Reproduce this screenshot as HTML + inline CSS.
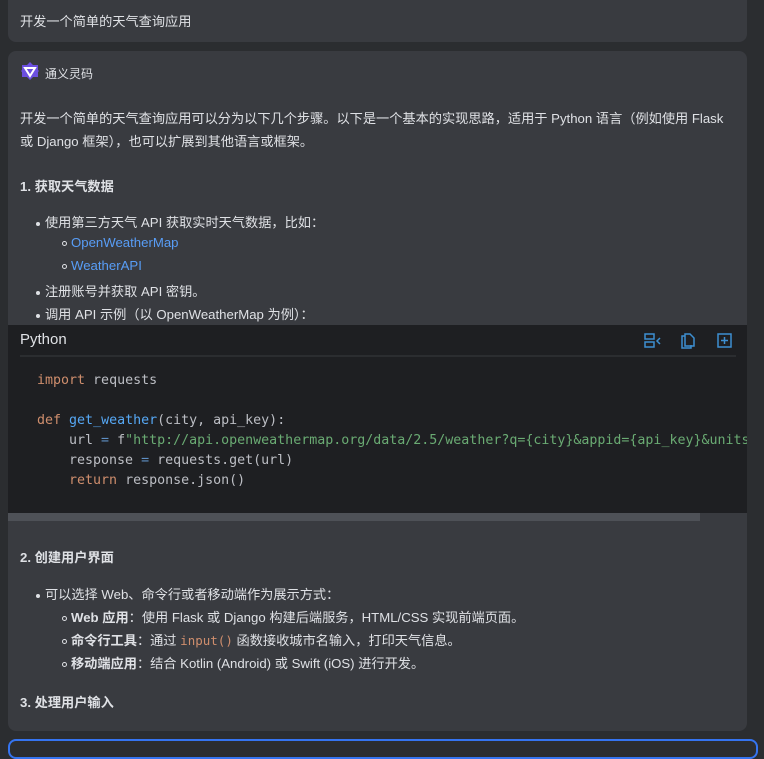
<!DOCTYPE html>
<html><head><meta charset="utf-8"><style>
*{margin:0;padding:0;box-sizing:border-box}
body{width:764px;height:746px;background:#2b2d30;overflow:hidden;position:relative;font-family:"Liberation Sans","Noto Sans CJK SC",sans-serif;color:#dfe1e5;font-size:13.2px}
.card{position:absolute;left:8px;width:739px;background:#393b40;border-radius:8px}
.t{position:absolute;left:20px;white-space:nowrap}
a{color:#589df6;text-decoration:none}
b{font-weight:bold}
.code{position:absolute;left:8px;top:325px;width:739px;height:196px;background:#1e1f22;overflow:hidden}
.k{color:#cf8e6d}.f{color:#56a8f5}.s{color:#6aab73}.o{color:#5f8fc4}
.dot{display:inline-block;width:4px;height:4px;background:#dfe1e5;border-radius:50%;margin-right:5px;vertical-align:middle}
.ring{display:inline-block;width:5px;height:5px;border:1px solid #dfe1e5;border-radius:50%;margin-right:4px;vertical-align:middle}
</style></head><body>
<div class="card" style="top:-10px;height:52px"></div>
<div class="t" style="top:11px">开发一个简单的天气查询应用</div>
<div class="card" style="top:51px;height:680px"></div>
<svg style="position:absolute;left:20px;top:61px" width="20" height="20" viewBox="0 0 20 20"><path d="M10 1l3 3h5v5l1 1-1 1v5h-5l-3 3-3-3H2v-5l-1-1 1-1V4h5z" fill="#6b4fe0"/><path d="M5 7h10l-5 8z" fill="none" stroke="#fff" stroke-width="2"/></svg>
<div class="t" style="top:65px;left:45px;font-size:12px">通义灵码</div>
<div class="t" style="top:108px">开发一个简单的天气查询应用可以分为以下几个步骤。以下是一个基本的实现思路，适用于 Python 语言（例如使用 Flask</div>
<div class="t" style="top:131px">或 Django 框架），也可以扩展到其他语言或框架。</div>
<div class="t" style="top:176px"><b>1. 获取天气数据</b></div>
<div class="t" style="top:212px;left:36px"><span class="dot"></span>使用第三方天气 API 获取实时天气数据，比如：</div>
<div class="t" style="top:235px;left:62px"><span class="ring"></span><a>OpenWeatherMap</a></div>
<div class="t" style="top:258px;left:62px"><span class="ring"></span><a>WeatherAPI</a></div>
<div class="t" style="top:281px;left:36px"><span class="dot"></span>注册账号并获取 API 密钥。</div>
<div class="t" style="top:304px;left:36px"><span class="dot"></span>调用 API 示例（以 OpenWeatherMap 为例）：</div>
<div class="code">
<div style="position:absolute;left:12px;top:6px;font-size:15px;color:#dfe1e5">Python</div>
<div style="position:absolute;left:12px;top:30px;width:716px;height:2px;background:#2b2d30"></div>
<svg style="position:absolute;left:636px;top:7px" width="100" height="18" viewBox="0 0 100 18" fill="none" stroke="#3d8fd1" stroke-width="1.5"><rect x="1" y="2" width="9" height="5"/><rect x="1" y="10" width="9" height="5"/><path d="M16 6l-3 3 3 3"/><path d="M41 4h-3v12h9v-3M41 2h5l4 4v8h-9z"/><rect x="74" y="2" width="13" height="13"/><path d="M80.5 5v7M77 8.5h7"/></svg>
<div style="position:absolute;left:0;top:188px;width:739px;height:8px;background:#393b40"></div>
<div style="position:absolute;left:0;top:188px;width:692px;height:8px;background:#4e5157"></div>
</div>
<pre style="position:absolute;left:37px;top:371px;font-family:'DejaVu Sans Mono','Liberation Mono',monospace;font-size:13.3px;line-height:20px;color:#bcbec4;width:710px;overflow:hidden"><span class="k">import</span> requests

<span class="k">def</span> <span class="f">get_weather</span>(city, api_key):
    url <span class="o">=</span> f<span class="s">"http://api.openweathermap.org/data/2.5/weather?q={city}&amp;appid={api_key}&amp;units</span>
    response <span class="o">=</span> requests.get(url)
    <span class="k">return</span> response.json()</pre>
<div class="t" style="top:547px"><b>2. 创建用户界面</b></div>
<div class="t" style="top:584px;left:36px"><span class="dot"></span>可以选择 Web、命令行或者移动端作为展示方式：</div>
<div class="t" style="top:607px;left:62px"><span class="ring"></span><b>Web 应用</b>：使用 Flask 或 Django 构建后端服务，HTML/CSS 实现前端页面。</div>
<div class="t" style="top:630px;left:62px"><span class="ring"></span><b>命令行工具</b>：通过 <span style="font-family:'DejaVu Sans Mono',monospace;color:#cf8e6d;font-size:12.5px">input()</span> 函数接收城市名输入，打印天气信息。</div>
<div class="t" style="top:653px;left:62px"><span class="ring"></span><b>移动端应用</b>：结合 Kotlin (Android) 或 Swift (iOS) 进行开发。</div>
<div class="t" style="top:692px"><b>3. 处理用户输入</b></div>
<div style="position:absolute;left:8px;top:739px;width:750px;height:20px;border:2px solid #3574f0;border-radius:8px;background:#2b2d30"></div>
</body></html>
